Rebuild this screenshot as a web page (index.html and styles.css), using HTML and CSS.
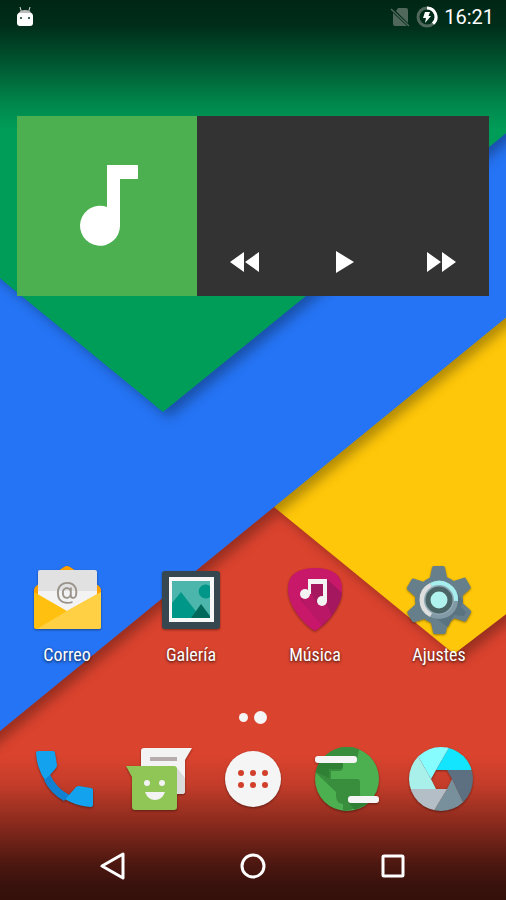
FILE: index.html
```html
<!DOCTYPE html>
<html lang="es">
<head>
    <meta charset="utf-8">
    <meta name="viewport" content="width=device-width, initial-scale=1">
    <title>Inicio</title>
    <link rel="stylesheet" href="styles.css">
</head>
<body>
    <svg class="wallpaper" viewBox="0 0 506 900" preserveAspectRatio="none" aria-hidden="true">
        <defs>
            <filter id="paper" x="-20%" y="-20%" width="140%" height="140%" color-interpolation-filters="sRGB">
                <feDropShadow dx="6" dy="6" stdDeviation="6" flood-color="#000" flood-opacity="0.3"/>
            </filter>
            <linearGradient id="shade-top" x1="0" y1="0" x2="0" y2="1">
                <stop offset="0" stop-opacity="0.76"/>
                <stop offset="0.2" stop-opacity="0.71"/>
                <stop offset="0.5" stop-opacity="0.44"/>
                <stop offset="0.8" stop-opacity="0.14"/>
                <stop offset="1" stop-opacity="0"/>
            </linearGradient>
            <linearGradient id="shade-bottom" x1="0" y1="0" x2="0" y2="1">
                <stop offset="0" stop-opacity="0"/>
                <stop offset="0.2" stop-opacity="0.1"/>
                <stop offset="0.45" stop-opacity="0.35"/>
                <stop offset="0.75" stop-opacity="0.65"/>
                <stop offset="0.9" stop-opacity="0.74"/>
                <stop offset="1" stop-opacity="0.76"/>
            </linearGradient>
        </defs>
        <rect width="506" height="900" fill="#da432e"/>
        <polygon points="274,507 454,654 560,573 560,200" fill="#ffc709" filter="url(#paper)"/>
        <polygon points="-60,-60 600,-60 600,241 274,507 -60,780" fill="#2574f5" filter="url(#paper)"/>
        <polygon points="-60,-60 600,-60 600,57 163,412 -60,229" fill="#009d58" filter="url(#paper)"/>
        <rect width="506" height="130" fill="url(#shade-top)"/>
        <rect y="755" width="506" height="145" fill="url(#shade-bottom)"/>
    </svg>

    <header class="status-bar">
        <svg class="status-icon" viewBox="0 0 20 22" aria-hidden="true">
            <path d="M5 1l1.500 5M15 1l-1.500 5" stroke="#ddd" stroke-width="1"/>
            <path d="M3 8q2-4 7-4t7 4z" fill="#bdbdbd"/>
            <path d="M2 10q0-3 3-3h10q3 0 3 3v7q0 3-3 3H5q-3 0-3-3z" fill="#fff"/>
            <circle cx="6" cy="12" r="1" fill="#003319"/>
            <circle cx="14" cy="12" r="1" fill="#003319"/>
        </svg>
        <div class="status-right">
            <svg class="status-icon" viewBox="0 0 20 22" aria-hidden="true">
                <path d="M8 2h8q2 0 2 2v13L6 5zM3 7l14 13H5q-2 0-2-2z" fill="#50675c"/>
                <path d="M1 3l18 17" stroke="#50675c" stroke-width="1.500"/>
            </svg>
            <svg class="status-icon" viewBox="0 0 22 22" aria-hidden="true">
                <circle cx="11" cy="11" r="9" fill="none" stroke="#50675c" stroke-width="3"/>
                <path d="M11 2a9 9 0 0 1 6 15.700" fill="none" stroke="#fff" stroke-width="3"/>
                <path d="M9 6h5l-1.500 4H15l-6 7 1-5H7z" fill="#fff"/>
            </svg>
            <time class="clock">16:21</time>
        </div>
    </header>

    <main class="home">
        <section class="player">
            <svg class="album" viewBox="0 0 180 180" aria-hidden="true">
                <path d="M90 49h31v14h-18v47a20 20 0 1 1-13-19z" fill="#fff"/>
            </svg>
            <div class="controls">
                <button aria-label="Anterior">
                    <svg viewBox="0 0 32 24"><path d="M14 2v20L0 12zM29 2v20L15 12z"/></svg>
                </button>
                <button aria-label="Reproducir">
                    <svg viewBox="0 0 32 24"><path d="M9 1v22l18-11z"/></svg>
                </button>
                <button aria-label="Siguiente">
                    <svg viewBox="0 0 32 24"><path d="M3 2v20l14-10zM18 2v20l14-10z"/></svg>
                </button>
            </div>
        </section>

        <section class="apps">
            <button class="app">
                <svg class="app-icon" viewBox="0 0 80 80" aria-hidden="true">
                    <path d="M7 30q0-2 2-4L37 7q3-2 6 0l29 19q2 2 2 4v10H7z" fill="#ff9f00"/>
                    <path d="M11 12q0-2 2-2h55q2 0 2 2v42H11z" fill="#e1e1e1"/>
                    <path d="M11 31h59v25H11z" fill="#f3f3f3"/>
                    <text class="mail-at" x="40" y="39" text-anchor="middle">@</text>
                    <path d="M7 32l33 19 34-19v35q0 2-2 2H9q-2 0-2-2z" fill="#ffc010"/>
                    <path d="M74 32v35q0 2-2 2H10l30-18z" fill="#ffd044"/>
                </svg>
                <span>Correo</span>
            </button>
            <button class="app">
                <svg class="app-icon" viewBox="0 0 80 80" aria-hidden="true">
                    <rect x="11" y="11" width="58" height="58" rx="3" fill="#37474f"/>
                    <rect x="18" y="17" width="45" height="45" fill="#f8f8f8"/>
                    <rect x="21" y="21" width="38" height="37" fill="#4db6ac"/>
                    <path d="M59 26v11a7 7 0 1 1 0-11z" fill="#009688"/>
                    <path d="M21 43l9-11 20 26H21z" fill="#009688"/>
                    <path d="M40 58l10-14 9 12v2z" fill="#00695c"/>
                </svg>
                <span>Galería</span>
            </button>
            <button class="app">
                <svg class="app-icon" viewBox="0 0 80 80" aria-hidden="true">
                    <path d="M40 8q12 0 20 5 7 5 7 16 0 12-9 25-8 11-18 17-10-6-18-17-9-13-9-25 0-11 7-16 8-5 20-5z" fill="#c8186a"/>
                    <path d="M52 19l15 14q-1 10-9 21-5 7-11 12L25 39l5-5 9-14z" fill="#a5175f"/>
                    <path d="M26 38l9-9 6 14 11 2 5 11-17 15q-4-2-8-6L40 60z" fill="#c8186a" opacity="0.6"/>
                    <path d="M33 19h19v22h-4V24H36v10h-3z" fill="#f3f3f3"/>
                    <circle cx="30" cy="34" r="5" fill="#f3f3f3"/>
                    <circle cx="47" cy="41" r="5" fill="#f3f3f3"/>
                </svg>
                <span>Música</span>
            </button>
            <button class="app">
                <svg class="app-icon" viewBox="0 0 80 80" aria-hidden="true">
                    <defs>
                        <path id="tooth" d="M30 22l3-14q0-2 2-2h9q2 0 2 2l3 14z"/>
                    </defs>
                    <g fill="#667f8b">
                        <circle cx="40" cy="40" r="24"/>
                        <use href="#tooth"/>
                        <use href="#tooth" transform="rotate(60 40 40)"/>
                        <use href="#tooth" transform="rotate(120 40 40)"/>
                        <use href="#tooth" transform="rotate(180 40 40)"/>
                        <use href="#tooth" transform="rotate(240 40 40)"/>
                        <use href="#tooth" transform="rotate(300 40 40)"/>
                    </g>
                    <path d="M53 26l11 15-2 6 5 5-2 4-10-1-6 12-17-12z" fill="#5a7380"/>
                    <circle cx="40" cy="40" r="19" fill="#8299a6"/>
                    <path d="M40 40L31 57A19 19 0 0 1 31 23z" fill="#dedede"/>
                    <path d="M40 40L31 23A19 19 0 0 1 59 41z" fill="#a7efee"/>
                    <circle cx="40" cy="40" r="15" fill="#90a9b5"/>
                    <circle cx="40" cy="40" r="11" fill="#b0f2ee" stroke="#4b6466" stroke-width="5"/>
                </svg>
                <span>Ajustes</span>
            </button>
        </section>

        <div class="pager">
            <span class="dot"></span>
            <span class="dot current"></span>
        </div>
    </main>

    <section class="dock">
        <button class="app" aria-label="Teléfono">
            <svg class="app-icon" viewBox="0 0 80 80" aria-hidden="true">
                <path d="M13 12h15q2 0 2 2l2 12q0 2-1 3l-6 7q6 13 19 20l7-8q1-1 3-1l12 2q2 0 2 2v15q0 2-2 2-21-1-38-17Q12 35 11 14q0-2 2-2z" fill="#13a2ee"/>
                <path d="M25 36q6 13 19 20l-5 6q-14-8-20-21z" fill="#1180d0"/>
            </svg>
        </button>
        <button class="app" aria-label="Mensajes">
            <svg class="app-icon" viewBox="0 0 80 80" aria-hidden="true">
                <path d="M25 9h48l-7 12v31q0 3-3 3H25q-3 0-3-3V12q0-3 3-3z" fill="#f3f3f3"/>
                <path d="M58 29l8 10v13q0 3-3 3h-5z" fill="#dadada"/>
                <path d="M31 18h27v4H31z" fill="#b7acac"/>
                <path d="M7 27h48q3 0 3 3v38q0 3-3 3H16q-3 0-3-3V38z" fill="#8fc656"/>
                <circle cx="28" cy="44" r="3" fill="#f3f3f3"/>
                <circle cx="43" cy="44" r="3" fill="#f3f3f3"/>
                <path d="M26 53h20q-3 8-10 8t-10-8z" fill="#f3f3f3"/>
            </svg>
        </button>
        <button class="app" aria-label="Aplicaciones">
            <svg class="app-icon" viewBox="0 0 80 80" aria-hidden="true">
                <circle cx="40" cy="40" r="28" fill="#f5f5f5"/>
                <g fill="#d23f2a">
                    <circle cx="28" cy="34" r="3"/>
                    <circle cx="40" cy="34" r="3"/>
                    <circle cx="52" cy="34" r="3"/>
                    <circle cx="28" cy="46" r="3"/>
                    <circle cx="40" cy="46" r="3"/>
                    <circle cx="52" cy="46" r="3"/>
                </g>
            </svg>
        </button>
        <button class="app" aria-label="Navegador">
            <svg class="app-icon" viewBox="0 0 80 80" aria-hidden="true">
                <clipPath id="disc"><circle cx="40" cy="40" r="32"/></clipPath>
                <g clip-path="url(#disc)">
                    <rect width="80" height="80" fill="#4caf50"/>
                    <path d="M8 24h28v4q0 4-4 4h-8v8h26q3 0 3 3v13l6 10-23 7v-8l-4-1q-3-3-3-6v-5L8 33z" fill="#388e3c"/>
                    <path d="M10 24h26v2q0 3-4 4H22v9l-15-7z" fill="#2f7f35"/>
                    <path d="M18 17l8-10h27l-3 13z" fill="#388e3c"/>
                    <path d="M41 63l7 8 14-7z" fill="#2f7f35"/>
                </g>
                <rect x="8" y="17" width="42" height="7" rx="3" fill="#f5f5f5"/>
                <rect x="41" y="57" width="31" height="7" rx="3" fill="#f5f5f5"/>
            </svg>
        </button>
        <button class="app" aria-label="Cámara">
            <svg class="app-icon" viewBox="0 0 80 80" aria-hidden="true">
                <g clip-path="url(#disc)">
                    <path d="M35 31L50 5h30v26z" fill="#12e5fd"/>
                    <path d="M46 31h34v31l-17 3-12-25z" fill="#5d7081"/>
                    <path d="M51 40l12 25-8 15H28l18-30z" fill="#78909c"/>
                    <path d="M46 50L28 80H0V50z" fill="#b4bec6"/>
                    <path d="M35 50H0V10l17 7 13 23z" fill="#aaf0ea"/>
                    <path d="M30 40L17 17 20 0h33L35 31z" fill="#86fcff"/>
                </g>
            </svg>
        </button>
    </section>

    <nav class="nav-bar">
        <button aria-label="Atrás">
            <svg viewBox="0 0 28 28"><path d="M24 2v24L3 14z"/></svg>
        </button>
        <button aria-label="Inicio">
            <svg viewBox="0 0 28 28"><circle cx="14" cy="14" r="11"/></svg>
        </button>
        <button aria-label="Recientes">
            <svg viewBox="0 0 28 28"><rect x="4" y="4" width="20" height="20" rx="1"/></svg>
        </button>
    </nav>
</body>
</html>
```
FILE: styles.css
```css
* {
    box-sizing: border-box;
}
body {
    display: flex;
    flex-direction: column;
    min-height: 100vh;
    margin: 0;
    position: relative;
    font-family: Roboto, sans-serif;
    color: #fff;
}
button {
    padding: 0;
    border: none;
    background: none;
    color: inherit;
    cursor: pointer;
}
svg {
    display: block;
}
/* sits behind everything else */
.wallpaper {
    position: absolute;
    top: 0;
    left: 0;
    width: 100%;
    height: 100%;
    z-index: -1;
}
.status-bar {
    display: flex;
    justify-content: space-between;
    align-items: center;
    height: 34px;
    padding: 0 12px 0 15px;
}
.status-right {
    display: flex;
    align-items: center;
    gap: 6px;
}
.status-icon {
    height: 22px;
}
.clock {
    font-size: 20px;
    line-height: 24px;
}
.home {
    flex: 1;
    display: flex;
    flex-direction: column;
}
.player {
    display: flex;
    height: 180px;
    margin: 82px 17px 0;
    background-color: #333;
}
.album {
    width: 180px;
    height: 180px;
    background-color: #4caf50;
}
.controls {
    flex: 1;
    display: flex;
    justify-content: space-around;
    align-self: flex-end;
    padding-bottom: 22px;
}
.controls svg {
    width: 32px;
    height: 24px;
    fill: #fff;
}
.apps {
    display: grid;
    grid-template-columns: repeat(4, 1fr);
    margin-top: auto;
    padding: 0 5px;
}
.app {
    display: flex;
    flex-direction: column;
    align-items: center;
    gap: 4px;
    font-family: "Roboto Condensed", "Liberation Sans Narrow", Roboto, sans-serif;
    font-size: 18px;
    line-height: 22px;
    text-shadow: 0 1px 3px rgba(0, 0, 0, 0.8);
}
.app-icon {
    width: 80px;
    height: 80px;
    filter: drop-shadow(0 1px 1px rgba(0, 0, 0, 0.4));
}
.mail-at {
    font-family: Inter, sans-serif;
    font-size: 24px;
    fill: #99938a;
    text-shadow: none;
}
.pager {
    display: flex;
    justify-content: center;
    align-items: center;
    gap: 6px;
    padding: 45px 0 15px;
}
.dot {
    width: 9px;
    height: 9px;
    border-radius: 50%;
    background-color: #f5f5f5;
}
.dot.current {
    width: 13px;
    height: 13px;
}
.dock {
    display: grid;
    grid-template-columns: repeat(5, 1fr);
    padding: 0 18px 13px;
}
.nav-bar {
    display: grid;
    grid-template-columns: repeat(3, 1fr);
    height: 68px;
    padding: 0 43px;
}
.nav-bar button {
    display: flex;
    align-items: center;
    justify-content: center;
}
.nav-bar svg {
    width: 28px;
    height: 28px;
    fill: none;
    stroke: #fff;
    stroke-width: 3;
    stroke-linejoin: round;
}
```
